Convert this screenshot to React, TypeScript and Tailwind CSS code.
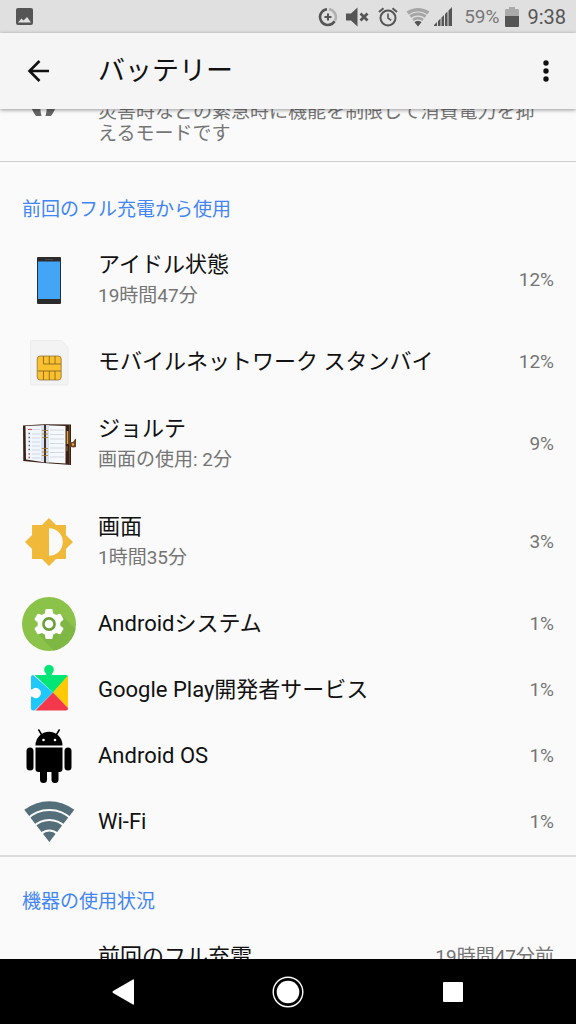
import React from 'react';

interface UsageItem {
  id: string;
  name: string;
  detail?: string;
  percent: number;
  icon: React.ReactNode;
}

const PhoneIcon = () => (
  <svg viewBox="0 0 54 54" className="size-[54px]" aria-hidden="true">
    <rect x="15" y="4" width="24" height="47" rx="1" fill="#2b2b2b" />
    <rect x="16" y="8.500" width="22" height="37.500" fill="#42a5f5" />
    <rect x="23" y="6" width="8" height="1" fill="#444" />
  </svg>
);

const SimIcon = () => (
  <svg viewBox="0 0 54 54" className="size-[54px]" aria-hidden="true">
    <path d="M9.500 5.500h30l6.500 7v36.500a1 1 0 0 1-1 1H9.500a1 1 0 0 1-1-1V6.500a1 1 0 0 1 1-1z" fill="#f3f3f3" stroke="#e9e9e9" strokeWidth="0.8" />
    <rect x="15.200" y="21" width="24" height="24" rx="3" fill="#fbc02d" stroke="#8f7440" strokeWidth="0.8" />
    <path d="M21.500 21v8M27.300 21v8M33 21v8M21.500 29h17.500M15.500 36h23.500M21.500 36v9M27.300 36v9M33 36v9" stroke="#7a5f1c" strokeWidth="0.800" fill="none" />
  </svg>
);

const DiaryIcon = () => (
  <svg viewBox="0 0 54 54" className="size-[54px]" aria-hidden="true">
    <path d="M1 8.500 22 7.300l27 .2v40.500L22 46 1.300 44z" fill="#3a2115" />
    <path d="M47.500 8v39.500" stroke="#6b452b" strokeWidth="1" />
    <path d="M3.500 9 22 8.300v37L4 42.500z" fill="#f1f5fc" />
    <path d="M24 8.300l19.500.7v37.500L24 45.300z" fill="#f5f9fe" />
    <path d="M19 8.500l3-.2v37l-3-.4zM24 8.300h3v37.300l-3-.3z" fill="#d5e1f5" />
    <path d="M10 12.500h8M10 17h8M10 21h8M10 25h8M10 29h8M10 33h8M10 37h8M10 41h8M28 13h14M28 17.500h14M28 22h14M28 26.500h14M28 31h14M28 35.500h14M28 40h14" stroke="#c6ccd6" strokeWidth="0.7" />
    <path d="M6 12.500h4" stroke="#e05050" strokeWidth="1.100" />
    <path d="M6.500 16.500h1.500M6.500 20.500h1.500M6.500 24.500h1.500M6.500 28.500h1.500M6.500 32.500h1.500" stroke="#5a6478" strokeWidth="1.400" />
    <path d="M6.500 37h1.500M6.500 40.500h1.500" stroke="#d05050" strokeWidth="1.300" />
    <path d="M20 13.500h6M20 17h6M20 20.500h6M20 31.500h6M20 35h6M20 38.500h6" stroke="#b98a35" strokeWidth="1.200" />
    <path d="M23 8.300v37" stroke="#5a4538" strokeWidth="0.8" />
    <path d="M45.500 14v13" stroke="#d9a441" strokeWidth="1.600" />
    <path d="M45 29v5" stroke="#8a6232" strokeWidth="1.200" />
    <path d="M47 25.500l4-.5 2.500-3.500 1 1.500-.5 7-2.500.5-4.500-1z" fill="#6b421f" />
    <circle cx="51" cy="27.500" r="1.200" fill="#e3b04f" />
  </svg>
);

const ScreenIcon = () => (
  <svg viewBox="0 0 54 54" className="size-[54px]" aria-hidden="true">
    <path
      transform="translate(1.560 1.560) scale(2.120)"
      d="M20 15.310 23.310 12 20 8.690V4h-4.690L12 .690 8.690 4H4v4.690L.690 12 4 15.310V20h4.690L12 23.310 15.310 20H20z"
      fill="#f0b93a"
    />
    <path d="M27 13.200a13.800 13.800 0 0 1 0 27.600z" fill="#fafafa" />
  </svg>
);

const SystemIcon = () => (
  <svg viewBox="0 0 54 54" className="size-[54px]" aria-hidden="true">
    <clipPath id="system-disc">
      <circle cx="27" cy="27" r="27" />
    </clipPath>
    <circle cx="27" cy="27" r="27" fill="#8bc34a" />
    <path clipPath="url(#system-disc)" d="M40 18.500 60 38v20H36L15 36z" fill="#7fb744" />
    <g fill="#fff">
      <circle cx="27" cy="27" r="11.300" />
      {[0, 60, 120].map((angle) => (
        <path
          key={angle}
          transform={`rotate(${angle} 27 27)`}
          d="M24.300 12h5.400q.7 0 .8.700l1 5.300v18l-1 5.300q-.1.700-.8.700h-5.400q-.7 0-.8-.7l-1-5.300V18l1-5.300q.1-.7.800-.7z"
        />
      ))}
    </g>
    <circle cx="27" cy="27" r="5.600" fill="#fff" stroke="#689f38" strokeWidth="2.600" />
  </svg>
);

const PlayServicesIcon = () => (
  <svg viewBox="0 0 54 54" className="size-[54px]" aria-hidden="true">
    <clipPath id="puzzle-piece">
      <path d="M11 12h12.500c.8 0 1-1 .4-1.700a4.800 4.800 0 1 1 6.200 0c-.6.700-.4 1.700.4 1.700H44a2 2 0 0 1 2 2v31.500a2 2 0 0 1-2 2H11a2 2 0 0 1-2-2V34.500c0-1 .8-1.200 1.700-.6a5 5 0 1 0 0-7.800c-.9.600-1.700.4-1.700-.6V14a2 2 0 0 1 2-2z" />
    </clipPath>
    <g clipPath="url(#puzzle-piece)">
      <path d="M8 9.500 31 29.500 10 50H0V9.500z" fill="#1fc8fb" />
      <path d="M12 11.500 31 29.500 48 11.500V0H12z" fill="#00e676" />
      <path d="M48 10 31 29.500 48 47z" fill="#ffca05" />
      <path d="M12 49 31 29.500 49 48v3z" fill="#f2384a" />
    </g>
  </svg>
);

const RobotIcon = () => (
  <svg viewBox="0 0 54 54" className="size-[54px]" aria-hidden="true">
    <path d="M13.500 16.500a13.500 13.700 0 0 1 27 0z" />
    <path d="M16.800 1 19.500 5.500M37.200 1 34.500 5.500" stroke="#000" strokeWidth="1.500" strokeLinecap="round" />
    <path d="M13.500 18.500h27v21.500a3 3 0 0 1-3 3h-21a3 3 0 0 1-3-3z" />
    <rect x="4.500" y="18.500" width="7" height="23" rx="3.500" />
    <rect x="42.500" y="18.500" width="7" height="23" rx="3.500" />
    <rect x="18" y="35" width="7" height="19" rx="3.500" />
    <rect x="29.500" y="35" width="7" height="19" rx="3.500" />
    <circle cx="21.500" cy="11" r="1.300" fill="#fff" />
    <circle cx="33" cy="11" r="1.300" fill="#fff" />
  </svg>
);

const WifiIcon = () => (
  <svg viewBox="0 0 54 54" className="size-[54px]" aria-hidden="true">
    <path d="M27.300 47 2.300 14.800a41 41 0 0 1 50 0z" fill="#546e7a" />
    <g fill="none" stroke="#fafafa" strokeWidth="2.200">
      <circle cx="27.300" cy="47" r="32" />
      <circle cx="27.300" cy="47" r="22" />
      <circle cx="27.300" cy="47" r="11.500" />
    </g>
  </svg>
);

const usage: UsageItem[] = [
  { id: 'idle', name: 'アイドル状態', detail: '19時間47分', percent: 12, icon: <PhoneIcon /> },
  { id: 'cell', name: 'モバイルネットワーク スタンバイ', percent: 12, icon: <SimIcon /> },
  { id: 'jorte', name: 'ジョルテ', detail: '画面の使用: 2分', percent: 9, icon: <DiaryIcon /> },
  { id: 'screen', name: '画面', detail: '1時間35分', percent: 3, icon: <ScreenIcon /> },
  { id: 'system', name: 'Androidシステム', percent: 1, icon: <SystemIcon /> },
  { id: 'gms', name: 'Google Play開発者サービス', percent: 1, icon: <PlayServicesIcon /> },
  { id: 'os', name: 'Android OS', percent: 1, icon: <RobotIcon /> },
  { id: 'wifi', name: 'Wi-Fi', percent: 1, icon: <WifiIcon /> },
];

const StatusBar = () => (
  <div className="flex h-[33px] shrink-0 items-center justify-between bg-[#e0e0e0] pr-2.5 pl-4 text-[#555]">
    <svg viewBox="0 0 17 17" className="size-[17px]" aria-hidden="true">
      <rect width="17" height="17" rx="2" fill="#555" />
      <path d="M2 14.500 5.500 10.500l2 2L11 9l4 5.500z" fill="#e0e0e0" />
    </svg>
    <div className="flex items-center gap-2">
      <svg viewBox="0 0 20 20" className="size-5" fill="none" aria-hidden="true">
        <path d="M11 2.200A7.900 7.900 0 0 1 17 13.600" stroke="#b0b0b0" strokeWidth="2.600" />
        <path d="M9 2.200A7.900 7.900 0 1 0 16.600 14.300" stroke="#555" strokeWidth="2.600" />
        <path d="M10 6.500v7M6.500 10h7" stroke="#555" strokeWidth="2" />
      </svg>
      <svg viewBox="0 0 24 20" className="h-5 w-6" aria-hidden="true">
        <path d="M0 6.500h5L11.500.5v19L5 13.500H0z" fill="#555" />
        <path d="M14.500 6.500l7 7M21.500 6.500l-7 7" stroke="#555" strokeWidth="2.800" />
      </svg>
      <svg viewBox="0 0 20 20" className="size-5" fill="none" stroke="#555" aria-hidden="true">
        <circle cx="10" cy="11" r="7.500" strokeWidth="2" />
        <path d="M10 6.500V11l3.200 2.300" strokeWidth="1.600" />
        <path d="M1 5 5.500 1.300M19 5l-4.500-3.700" strokeWidth="2" />
      </svg>
      <div className="flex items-center gap-1 pr-1">
        <svg viewBox="0 0 24 20" className="h-5 w-6" aria-hidden="true">
          <path d="M12 19.500.500 4.500Q6 1 12 1t11.500 3.500z" fill="#a6a6a6" />
          <path d="M12 19.500 8 14.400q4-2 8 0z" fill="#555" />
          <g fill="none" stroke="#e0e0e0" strokeWidth="1.200">
            <circle cx="12" cy="19.500" r="14.500" />
            <circle cx="12" cy="19.500" r="10.300" />
            <circle cx="12" cy="19.500" r="6.300" />
          </g>
        </svg>
        <svg viewBox="0 0 18 20" className="h-5 w-[18px]" fill="#555" aria-hidden="true">
          <path d="M0 19v-1l3-3v4zM4 19v-5l2.500-2.500V19zM7.500 19v-8.500L10 8v11zM11 19V7l2.500-2.500V19zM14.500 19V3.500L18 0v19z" />
        </svg>
      </div>
      <div className="flex items-center gap-1.5">
        <span className="text-[19px] leading-6 text-[#777]">59%</span>
        <svg viewBox="0 0 14 20" className="h-5 w-3.5" aria-hidden="true">
          <path d="M4 0h6v2h3a1 1 0 0 1 1 1v6H0V3a1 1 0 0 1 1-1h3z" fill="#aaa" />
          <path d="M0 9h14v10a1 1 0 0 1-1 1H1a1 1 0 0 1-1-1z" fill="#555" />
        </svg>
      </div>
      <time className="text-[20px] leading-6">9:38</time>
    </div>
  </div>
);

const AppBar = () => (
  <header className="relative z-10 flex h-[76px] shrink-0 items-center bg-[#f5f5f5] pr-4 pl-[26px] text-[#111] shadow-[0_1px_4px_rgba(0,0,0,0.4)]">
    <button type="button" aria-label="戻る" className="mr-12 size-6">
      <svg viewBox="0 0 24 24" className="size-6" fill="none" stroke="currentColor" strokeWidth="2.600" aria-hidden="true">
        <path d="M23 12H3.500M13.500 2 3.500 12l10 10" />
      </svg>
    </button>
    <h1 className="flex-1 text-[27px] leading-9">バッテリー</h1>
    <button type="button" aria-label="その他のオプション" className="flex w-7 justify-center">
      <svg viewBox="0 0 6 24" className="h-6 w-1.5" fill="currentColor" aria-hidden="true">
        <circle cx="3" cy="4" r="2.700" />
        <circle cx="3" cy="12" r="2.700" />
        <circle cx="3" cy="20" r="2.700" />
      </svg>
    </button>
  </header>
);

const UsageRow = ({ item }: { item: UsageItem }) => (
  <li>
    <a
      href={`#${item.id}`}
      className={`flex items-center gap-[22px] px-[22px] ${item.detail ? 'h-[98px]' : 'h-[66px]'}`}
    >
      {item.icon}
      <div className="flex-1">
        <p className="text-[22px] leading-8 text-[#111]">{item.name}</p>
        {item.detail && <p className="text-[19px] leading-[30px] text-[#757575]">{item.detail}</p>}
      </div>
      <span className="text-[19px] leading-[30px] text-[#757575]">{item.percent}%</span>
    </a>
  </li>
);

const NavBar = () => (
  <nav className="flex h-[65px] shrink-0 items-center bg-black px-10 text-white">
    <button type="button" aria-label="戻る" className="flex flex-1 justify-center">
      <svg viewBox="0 0 24 28" className="h-7 w-6" fill="currentColor" aria-hidden="true">
        <path d="M23 2v24q0 1-1 .5L2 15q-1.200-1 0-2L22 1.500q1-.5 1 .5z" />
      </svg>
    </button>
    <button type="button" aria-label="ホーム" className="flex flex-1 justify-center">
      <svg viewBox="0 0 32 32" className="size-8" aria-hidden="true">
        <circle cx="16" cy="16" r="14.800" fill="none" stroke="currentColor" strokeWidth="1.400" />
        <circle cx="16" cy="16" r="11.300" fill="currentColor" />
      </svg>
    </button>
    <button type="button" aria-label="最近使ったアプリ" className="flex flex-1 justify-center">
      <svg viewBox="0 0 20 20" className="size-5" fill="currentColor" aria-hidden="true">
        <rect width="20" height="20" rx="1" />
      </svg>
    </button>
  </nav>
);

const App: React.FC = () => {
  return (
    <div
      lang="ja"
      className="flex h-screen flex-col overflow-hidden bg-[#fafafa] font-['Roboto','Noto_Sans_CJK_JP',sans-serif]"
    >
      <StatusBar />
      <AppBar />

      <main className="min-h-0 flex-1 overflow-hidden">
        {/* Battery saver entry, partly scrolled under the app bar */}
        <section className="-mt-2 flex gap-[22px] border-b border-[#d0d0d0] pr-[30px] pb-4 pl-[22px]">
          <svg viewBox="0 0 54 20" className="h-5 w-[54px] shrink-0" fill="#666" aria-hidden="true">
            <path d="M9 6h9.500q-.5 4 1 9h-5.500Q11 11 9 6zM34 6h-9.500q.5 4-1 9h5.500q3-4 5-9z" />
          </svg>
          <p className="flex-1 text-[19px] leading-[22px] text-[#757575]">
            災害時などの緊急時に機能を制限して消費電力を抑えるモードです
          </p>
        </section>

        <section className="border-b-2 border-[#dcdcdc]">
          <h2 className="px-[22px] pt-[33px] pb-1.5 text-[19px] leading-[30px] text-[#4285f4]">前回のフル充電から使用</h2>
          <ul>
            {usage.map((item) => (
              <UsageRow key={item.id} item={item} />
            ))}
          </ul>
        </section>

        <section>
          <h2 className="px-[22px] pt-[30px] pb-3.5 text-[19px] leading-[30px] text-[#4285f4]">機器の使用状況</h2>
          <div className="flex items-center justify-between pt-2.5 pr-[22px] pl-[98px]">
            <p className="text-[22px] leading-8 text-[#111]">前回のフル充電</p>
            <span className="text-[19px] leading-8 text-[#757575]">19時間47分前</span>
          </div>
        </section>
      </main>

      <NavBar />
    </div>
  );
};

export default App;
